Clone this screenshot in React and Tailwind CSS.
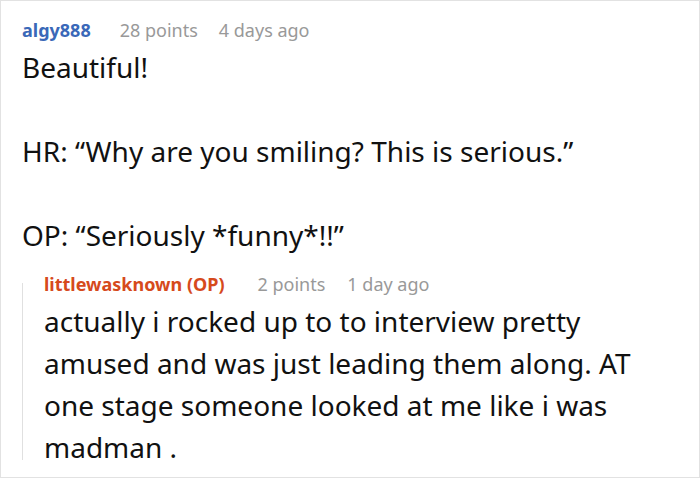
export default function App() {
  const font = { fontFamily: '"Noto Sans", "Open Sans", sans-serif' };

  return (
    <div
      className="w-[700px] h-[478px] overflow-hidden border border-[#e2e2e2] bg-white px-[21px] pt-[15px] text-[#111]"
      style={font}
    >
      <div className="flex items-baseline h-[28px] text-[18px] leading-[28px]">
        <span className="font-bold text-[#3a68b8] mr-[29px]">algy888</span>
        <span className="text-[#999] mr-[21px]">28 points</span>
        <span className="text-[#999]">4 days ago</span>
      </div>

      <div className="mt-[2px] text-[28px] leading-[42px]">
        <div>Beautiful!</div>
        <div className="h-[42px]" />
        <div>HR: “Why are you smiling? This is serious.”</div>
        <div className="h-[42px]" />
        <div>OP: “Seriously *funny*!!”</div>
      </div>

      <div className="mt-[14px] flex">
        <div className="w-px shrink-0 bg-[#e0e0e0] mt-[13px] mb-[8px]" />
        <div className="pl-[21px] flex-1">
          <div className="flex items-baseline h-[28px] text-[18px] leading-[28px]">
            <span className="font-bold text-[#d64a1c] mr-[33px]">littlewasknown (OP)</span>
            <span className="text-[#999] mr-[22px]">2 points</span>
            <span className="text-[#999]">1 day ago</span>
          </div>
          <p className="mt-[2px] text-[28px] leading-[42px]">
            actually i rocked up to to interview pretty amused and was just leading them along. AT
            one stage someone looked at me like i was madman .
          </p>
        </div>
      </div>
    </div>
  );
}
